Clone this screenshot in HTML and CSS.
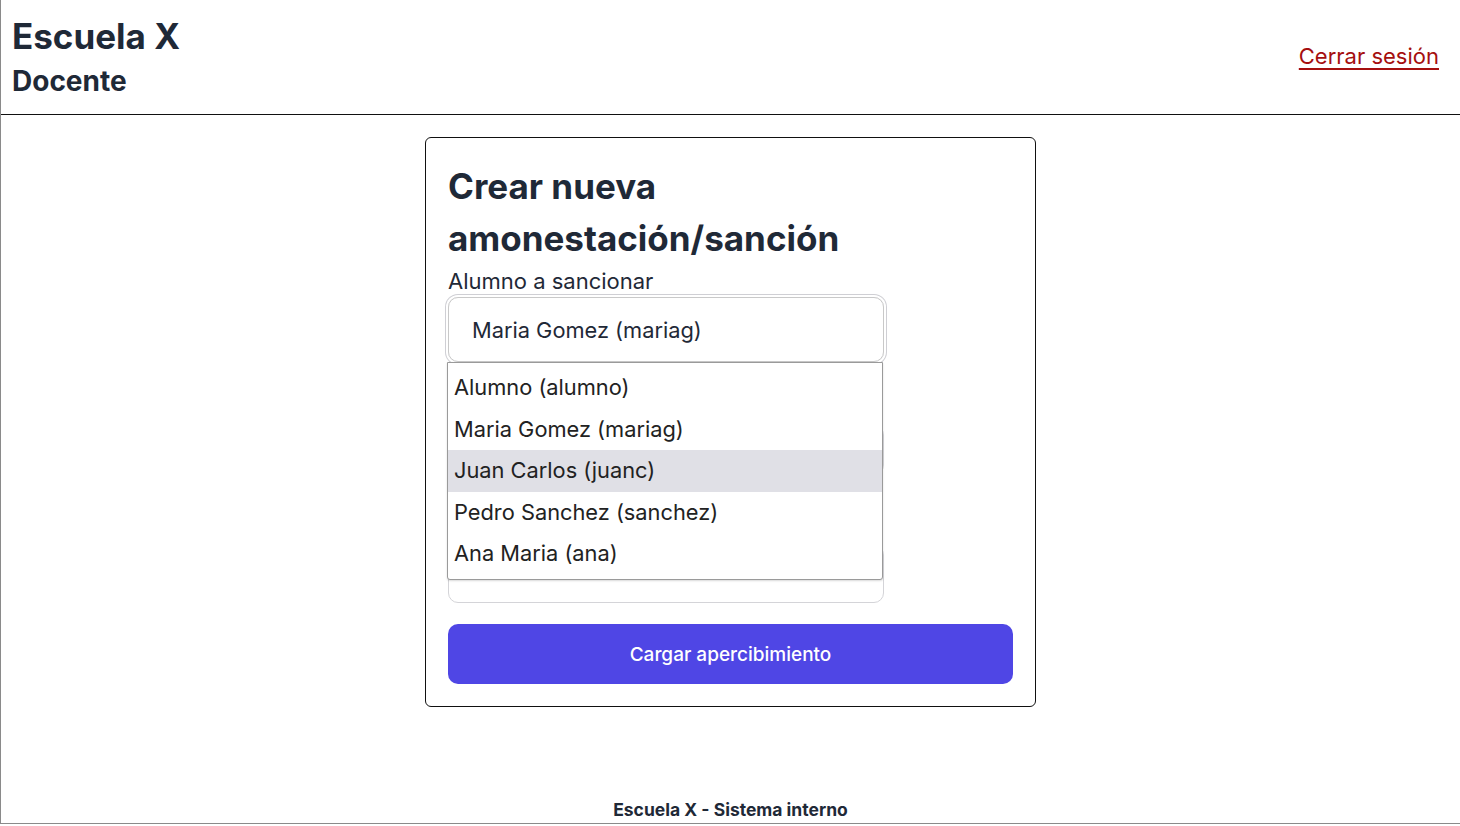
FILE: index.html
```html
<!DOCTYPE html>
<html lang="es">
<head>
<meta charset="utf-8">
<title>Escuela X</title>
<link rel="stylesheet" href="styles.css">
</head>
<body>
<div class="frame">
  <header class="topbar">
    <div class="brand">
      <h1 class="brand-title">Escuela X</h1>
      <h2 class="brand-role">Docente</h2>
    </div>
    <a class="logout" href="#">Cerrar sesión</a>
  </header>
  <main class="content">
    <form class="card">
      <h2 class="card-title">Crear nueva amonestación/sanción</h2>
      <label class="field-label">Alumno a sancionar</label>
      <div class="select-wrap">
        <div class="select focus">Maria Gomez (mariag)</div>
        <ul class="dropdown">
          <li class="option">Alumno (alumno)</li>
          <li class="option">Maria Gomez (mariag)</li>
          <li class="option active">Juan Carlos (juanc)</li>
          <li class="option">Pedro Sanchez (sanchez)</li>
          <li class="option">Ana Maria (ana)</li>
        </ul>
      </div>
      <div class="spacer"></div>
      <div class="input"></div>
      <div class="spacer second"></div>
      <div class="input tall"></div>
      <button type="button" class="submit">Cargar apercibimiento</button>
    </form>
  </main>
  <footer class="footer">Escuela X - Sistema interno</footer>
</div>
</body>
</html>
```
FILE: styles.css
```css
* { box-sizing: border-box; }
html, body { margin: 0; padding: 0; }
body {
  font-family: Inter, "Noto Sans", sans-serif;
  color: #1f2937;
  background: #fff;
}
.frame {
  width: 1460px;
  height: 824px;
  border-left: 1px solid #8a8a8a;
  border-bottom: 1px solid #8a8a8a;
  display: flex;
  flex-direction: column;
}
.topbar {
  display: flex;
  justify-content: space-between;
  align-items: center;
  padding: 0 21px 0 11px;
  border-bottom: 1px solid #111;
  height: 115px;
}
.brand-title {
  margin: 0;
  font-size: 35px;
  font-weight: 700;
  line-height: 42px;
}
.brand-role {
  margin: 6px 0 0;
  font-size: 28px;
  font-weight: 700;
  line-height: 36px;
}
.logout {
  color: #a50f0f;
  font-size: 22px;
  text-decoration: underline;
  text-underline-offset: 4px;
  margin-bottom: 2px;
}
.content {
  flex: 1;
  display: flex;
  justify-content: center;
  align-items: flex-start;
  padding-top: 22px;
}
.card {
  width: 611px;
  border: 1px solid #111;
  border-radius: 6px;
  padding: 22px 22px;
  display: flex;
  flex-direction: column;
}
.card-title {
  margin: 0;
  font-size: 35px;
  line-height: 52px;
  font-weight: 700;
  width: 480px;
}
.field-label {
  font-size: 22px;
  line-height: 24px;
  display: block;
  margin-top: 5px;
}
.spacer { height: 63px; }
.spacer.second { height: 70px; }
.select-wrap {
  position: relative;
  width: 436px;
  margin-top: 4px;
}
.select {
  height: 65px;
  border: 1px solid #c9c9c9;
  border-radius: 10px;
  padding: 0 23px;
  display: flex;
  align-items: center;
  font-size: 21.8px;
}
.select.focus {
  box-shadow: 0 0 0 2px #fff, 0 0 0 3px #cfcfd4;
}
.dropdown {
  position: absolute;
  top: 65px;
  left: -1px;
  width: 436px;
  margin: 0;
  padding: 4px 0 4px;
  list-style: none;
  background: #fff;
  border: 1px solid #9a9a9a;
  border-radius: 0 0 3px 3px;
  box-shadow: 0 1px 2px rgba(0,0,0,0.15);
  z-index: 2;
}
.option {
  height: 41.6px;
  line-height: 41.6px;
  padding: 0 6px;
  font-size: 21.8px;
  color: #222;
}
.option.active { background: #e0e0e6; }
.input {
  width: 436px;
  height: 50px;
  border: 1px solid #d4d4d8;
  border-radius: 10px;
}
.input.tall { height: 58px; }
.submit {
  margin-top: 21px;
  height: 60px;
  width: 100%;
  border: none;
  border-radius: 10px;
  background: #4f46e5;
  color: #fff;
  font-family: Inter, sans-serif;
  font-size: 19px;
  font-weight: 500;
}
.footer {
  text-align: center;
  font-weight: 700;
  font-size: 17.5px;
  padding-bottom: 1px;
  line-height: 24px;
}
```
